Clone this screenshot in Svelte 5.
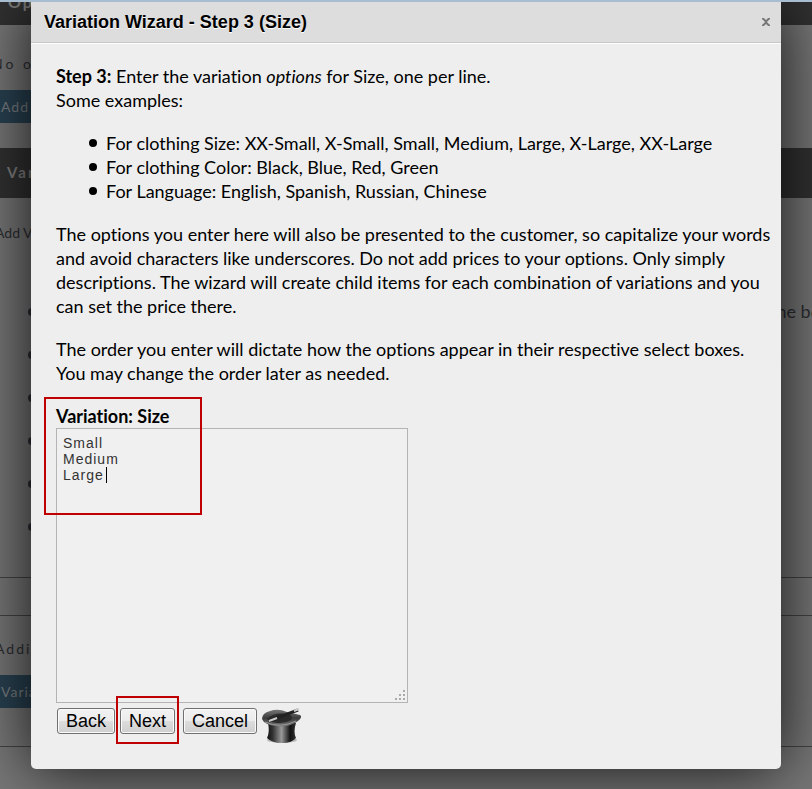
<script lang="ts">
	let options = $state('Small\nMedium\nLarge');

	const examples = [
		'For clothing Size: XX-Small, X-Small, Small, Medium, Large, X-Large, XX-Large',
		'For clothing Color: Black, Blue, Red, Green',
		'For Language: English, Spanish, Russian, Chinese'
	];
	const notes = ['the boxes', 's.', '', '', '', ''];
</script>

<div class="stage">
	<div class="page" aria-hidden="true">
		<div class="bar bar-top">Options</div>
		<div class="row empty">No options</div>
		<div class="action">Add</div>
		<div class="bar bar-section">Variations</div>
		<div class="row intro">Add Variations</div>
		<ul class="notes">
			{#each notes as note}
				<li><span>{note}</span></li>
			{/each}
		</ul>
		<div class="band"></div>
		<div class="row additional">Additional</div>
		<div class="action second">Variations</div>
		<div class="end"></div>
	</div>

	<div class="dialog" role="dialog" aria-labelledby="title">
		<header>
			<h1 id="title">Variation Wizard - Step 3 (Size)</h1>
			<button class="close" aria-label="Close">
				<svg width="10" height="8" viewBox="0 0 10 8">
					<path d="M1 .7h1.6L5 3l2.400-2.300H9M1 7.300h1.600L5 5l2.400 2.300H9M2.200 1l5.600 6M7.800 1L2.200 7" />
				</svg>
			</button>
		</header>
		<div class="body">
			<p>
				<strong>Step 3:</strong> Enter the variation <em>options</em> for Size, one per line.<br />
				Some examples:
			</p>
			<ul class="examples">
				{#each examples as example}
					<li>{example}</li>
				{/each}
			</ul>
			<p>
				The options you enter here will also be presented to the customer, so capitalize your words
				and avoid characters like underscores. Do not add prices to your options. Only simply
				descriptions. The wizard will create child items for each combination of variations and you
				can set the price there.
			</p>
			<p>
				The order you enter will dictate how the options appear in their respective select boxes.
				You may change the order later as needed.
			</p>
			<div class="field">
				<label for="options">Variation: Size</label>
				<div class="box">
					<textarea id="options" bind:value={options} spellcheck="false"></textarea>
					<span class="caret"></span>
					<svg class="grip" width="12" height="12" viewBox="0 0 12 12">
						<path d="M9 1h2v2H9zM5 5h2v2H5zM9 5h2v2H9zM1 9h2v2H1zM5 9h2v2H5zM9 9h2v2H9z" />
					</svg>
				</div>
				<span class="mark mark-field"></span>
			</div>
			<div class="buttons">
				<button>Back</button>
				<div class="next">
					<button>Next</button>
					<span class="mark mark-next"></span>
				</div>
				<button>Cancel</button>
				<svg class="hat" width="40" height="36" viewBox="0 0 40 36">
					<defs>
						<linearGradient id="crown">
							<stop offset="0" stop-color="#111" />
							<stop offset=".2" stop-color="#333" />
							<stop offset=".5" stop-color="#999" />
							<stop offset=".65" stop-color="#555" />
							<stop offset=".8" stop-color="#111" />
							<stop offset="1" stop-color="#333" />
						</linearGradient>
						<linearGradient id="brim" x2="0" y2="1">
							<stop offset="0" stop-color="#777" />
							<stop offset=".5" stop-color="#3c3c3c" />
							<stop offset="1" stop-color="#777" />
						</linearGradient>
					</defs>
					<ellipse cx="20" cy="32" rx="15" ry="3" fill="#bbb" />
					<path d="M6 15Q8 24 5 30Q10 35 20 35T34 30Q31 24 34 15Z" fill="url(#crown)" />
					<path
						d="M0 11Q0 5 8 3Q16 0 25 4L38 7Q41 9 36 13Q27 20 15 18Q2 17 0 11Z"
						fill="url(#brim)"
					/>
					<path d="M5 11Q12 4 26 6Q32 8 29 12Q24 15 18 15Q8 15 5 11Z" fill="#2a2a2a" />
					<path d="M3 14Q18 21 34 13" fill="none" stroke="#999" />
					<path d="M7 13L36 2" stroke="#222" stroke-width="3" />
					<path d="M7 13L15 10M32 3L37 1" stroke="#ccc" stroke-width="2" />
				</svg>
			</div>
		</div>
	</div>
</div>

<style>
	:global(body) {
		margin: 0;
		background: #787878;
	}
	.stage {
		display: grid;
		grid-template-columns: minmax(0, 1fr);
		min-height: 100vh;
		box-sizing: border-box;
		border-top: 2px solid #a9bdd0;
		overflow: hidden;
		font-family: Lato, sans-serif;
		font-variant-ligatures: none;
	}
	.page,
	.dialog {
		grid-area: 1 / 1;
	}

	.page {
		overflow: hidden;
		font-size: 14px;
		color: #2c2e33;
	}
	.bar {
		box-sizing: border-box;
		background: #323232;
		color: #808080;
		font-size: 16px;
		font-weight: bold;
		letter-spacing: 2px;
	}
	.bar-top {
		height: 23px;
		padding-left: 8px;
		line-height: 0;
	}
	.bar-section {
		height: 50px;
		margin-top: 25px;
		padding-left: 7px;
		line-height: 48px;
		font-size: 15px;
	}
	.row {
		width: 50px;
		margin-left: -5px;
		overflow: hidden;
		white-space: nowrap;
	}
	.empty {
		height: 65px;
		margin-left: -8px;
		line-height: 78px;
		letter-spacing: 3px;
	}
	.action {
		height: 33px;
		padding-left: 1px;
		line-height: 33px;
		background: linear-gradient(90deg, #294252 40px, #787878 40px);
		color: #7c8084;
		letter-spacing: 1px;
	}
	.intro {
		height: 92px;
		line-height: 70px;
	}
	.notes {
		margin: 0;
		padding: 0 0 0 28px;
		list-style: none;
		font-size: 18px;
	}
	.notes li,
	.examples li {
		display: flex;
		align-items: center;
	}
	.notes li::before,
	.examples li::before {
		content: '';
		flex: none;
		width: 8px;
		height: 8px;
		margin-right: 9px;
		border-radius: 50%;
		background: currentColor;
	}
	.notes li {
		height: 43px;
		line-height: 43px;
	}
	.notes span {
		display: block;
		width: 42px;
		margin-left: auto;
		overflow: hidden;
		white-space: nowrap;
	}
	.band {
		height: 37px;
		margin-top: 29px;
		border: solid #444;
		border-width: 1px 0;
	}
	.additional {
		height: 59px;
		line-height: 66px;
		letter-spacing: 2px;
	}
	.end {
		margin-top: 38px;
		border-top: 1px solid #444;
	}

	.dialog {
		box-sizing: border-box;
		align-self: start;
		margin: 0 31px 21px;
		background: #eee;
		border-radius: 0 0 5px 5px;
		box-shadow: 0 0 65px rgba(0, 0, 0, 0.87);
		color: #000;
		z-index: 1;
	}
	header {
		display: flex;
		align-items: center;
		justify-content: space-between;
		height: 40px;
		padding: 0 10px 0 13px;
		background: #ddd;
		border-bottom: 1px solid #c8c8c8;
		box-shadow: 0 1px 0 #fff;
	}
	h1 {
		margin: 0;
		font: bold 18px 'Liberation Sans', Arial, sans-serif;
		text-shadow: 0 1px 0 #fff;
	}
	.close {
		display: flex;
		padding: 0;
		border: 0;
		background: none;
	}
	.close path {
		fill: none;
		stroke: #777;
		stroke-width: 1.4;
	}
	.body {
		padding: 21px 5px 25px 25px;
		font-size: 18px;
		line-height: 24px;
	}
	p {
		margin: 0 0 19px;
	}
	.examples {
		margin: 0 0 19px;
		padding-left: 33px;
		list-style: none;
	}
	.field {
		position: relative;
	}
	label {
		display: block;
		font-weight: bold;
	}
	.box {
		position: relative;
		width: 352px;
		max-width: 100%;
	}
	textarea {
		display: block;
		box-sizing: border-box;
		width: 100%;
		height: 275px;
		margin: 0;
		padding: 6px;
		border: 1px solid #b4b4b4;
		background: #f0f0f0;
		color: #333;
		font: 14px/16px 'Liberation Sans', Arial, sans-serif;
		letter-spacing: 1px;
		resize: none;
		outline: none;
	}
	.caret {
		position: absolute;
		left: 50px;
		top: 39px;
		width: 1px;
		height: 16px;
		background: #000;
	}
	.grip {
		position: absolute;
		right: 2px;
		bottom: 2px;
		fill: #aaa;
	}
	.mark {
		position: absolute;
		box-sizing: border-box;
		border: 2px solid #c00000;
		pointer-events: none;
	}
	.mark-field {
		left: -12px;
		top: -7px;
		width: 158px;
		height: 118px;
	}
	.buttons {
		display: flex;
		align-items: flex-start;
		gap: 5px;
		padding: 5px 0 0 1px;
	}
	.buttons button {
		height: 26px;
		padding: 0 8px;
		border: 1px solid #707070;
		border-radius: 3px;
		background: linear-gradient(#f2f2f2, #ebebeb 50%, #ddd 50%, #cfcfcf);
		box-shadow: inset 0 0 0 1px #fafafa;
		color: #000;
		font: 18px/24px 'Liberation Sans', Arial, sans-serif;
	}
	.next {
		position: relative;
		display: flex;
		margin-right: 3px;
	}
	.mark-next {
		inset: -12px -4px -10px;
	}
</style>
